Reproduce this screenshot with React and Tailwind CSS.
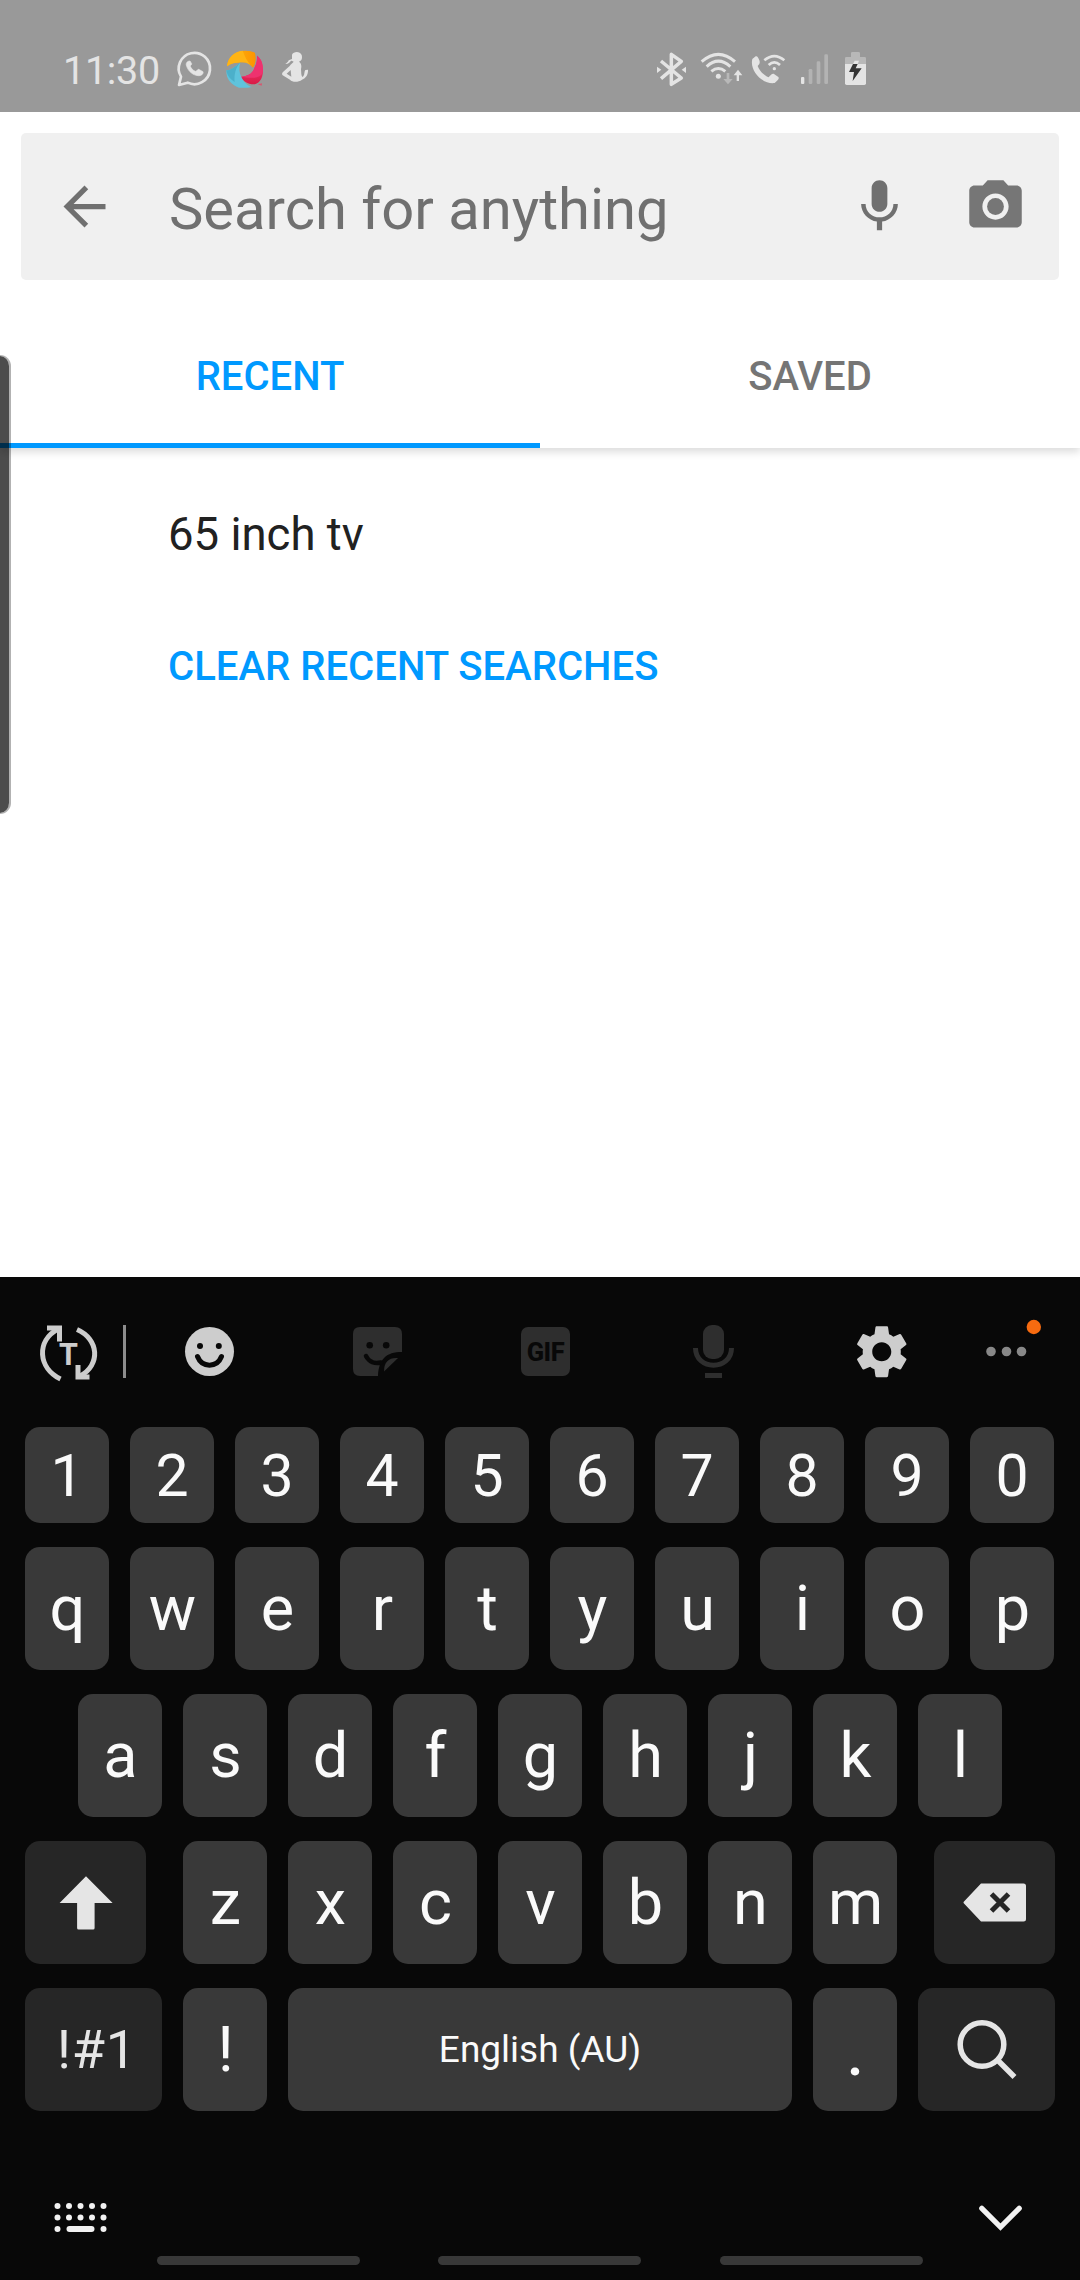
import React from "react";

const settingsPath =
  "M19.14,12.94c0.04-0.3,0.06-0.61,0.06-0.94c0-0.32-0.02-0.64-0.07-0.94l2.03-1.58c0.18-0.14,0.23-0.41,0.12-0.61l-1.92-3.32c-0.12-0.22-0.37-0.29-0.59-0.22l-2.39,0.96c-0.5-0.38-1.03-0.7-1.62-0.94L14.4,2.81c-0.04-0.24-0.24-0.41-0.48-0.41h-3.84c-0.24,0-0.43,0.17-0.47,0.41L9.25,5.35C8.66,5.59,8.12,5.92,7.63,6.29L5.24,5.33c-0.22-0.08-0.47,0-0.59,0.22L2.74,8.87C2.62,9.08,2.66,9.34,2.86,9.48l2.03,1.58C4.84,11.36,4.8,11.69,4.8,12s0.02,0.64,0.07,0.94l-2.03,1.58c-0.18,0.14-0.23,0.41-0.12,0.61l1.92,3.32c0.12,0.22,0.37,0.29,0.59,0.22l2.39-0.96c0.5,0.38,1.03,0.7,1.62,0.94l0.36,2.54c0.05,0.24,0.24,0.41,0.48,0.41h3.84c0.24,0,0.44-0.17,0.47-0.41l0.36-2.54c0.59-0.24,1.13-0.56,1.62-0.94l2.39,0.96c0.22,0.08,0.47,0,0.59-0.22l1.92-3.32c0.12-0.22,0.07-0.47-0.12-0.61L19.14,12.94z M12,15.6c-1.98,0-3.6-1.62-3.6-3.6s1.62-3.6,3.6-3.6s3.6,1.62,3.6,3.6S13.98,15.6,12,15.6z";

function WhatsApp() {
  return (
    <svg className="ml-[15px] h-[40px] w-[40px] shrink-0" viewBox="525 57 120 120" fill="none">
      <path d="M537 165L543 140A47 47 0 1 1 563 158Z" stroke="#e4e4e4" strokeWidth="8" strokeLinejoin="round" />
      <path
        d="M565 94C559 96 557 103 560 109C565 124 580 137 596 137C604 137 611 132 609 125L596 118C592 118 590 125 586 124C580 122 573 115 571 109C571 105 576 104 575 101L570 93Z"
        fill="#e4e4e4"
        stroke="#e4e4e4"
        strokeWidth="2"
      />
    </svg>
  );
}

function Pinwheel() {
  return (
    <svg className="ml-[10px] h-[40px] w-[40px] shrink-0" viewBox="675 55 120 120">
      <defs>
        <linearGradient id="amber" x1="0" x2="1">
          <stop offset="0.4" stopColor="#fdaa0a" />
          <stop offset="1" stopColor="#fc9400" />
        </linearGradient>
        <linearGradient id="pink" x1="0" x2="0" y1="0" y2="1">
          <stop offset="0.4" stopColor="#f0326c" />
          <stop offset="1" stopColor="#d81b45" />
        </linearGradient>
      </defs>
      <path d="M681 107C683 80 705 60 737 60C752 61 764 64 765 67C769 84 767 100 759 111C748 98 735 93 722 95C705 96 692 99 681 107Z" fill="url(#amber)" />
      <path d="M681 107C683 80 703 62 728 60C734 75 742 95 759 111C748 97 736 93 722 95C705 96 692 99 681 107Z" fill="#ffb414" />
      <path d="M771 75C784 85 789 98 789 122C788 146 775 161 762 161C742 161 728 150 723 138C742 137 757 129 762 115C769 100 772 90 771 75Z" fill="url(#pink)" />
      <path d="M771 75C784 85 789 98 789 122C786 134 778 140 762 141C748 142 736 139 723 138C742 137 757 129 762 115C769 100 772 90 771 75Z" fill="#ee326f" />
      <path d="M679 119C690 120 703 109 721 96C716 110 717 126 725 141C731 154 743 165 756 169C742 172 730 172 717 171C694 163 678 146 679 119Z" fill="#5fc3dc" />
      <path d="M679 119C690 120 703 109 721 96C707 110 702 130 704 154C689 145 682 135 679 119Z" fill="#4cb0ca" />
      <path d="M773 161L786 158L785 165Z" fill="#d9566f" />
    </svg>
  );
}

function Figure() {
  return (
    <svg className="ml-[12px] h-[36px] w-[36px] shrink-0" viewBox="831 63 108 108" fill="#e4e4e4">
      <path d="M876 80C880 70 900 68 905 81C908 92 904 99 897 101C905 106 905 116 903 123C904 135 903 141 907 147C915 143 912 131 916 126L924 125C925 139 918 150 906 155C895 163 877 163 870 155L848 142C845 139 846 135 849 132L869 114C872 108 878 105 881 101C877 99 875 98 873 98C869 104 864 109 856 108C862 104 865 101 866 97L876 93Z" />
      <path d="M860 137L872 126L874 146Z" fill="#999999" />
    </svg>
  );
}

function StatusBar() {
  return (
    <div className="flex h-[112px] items-start bg-[#999999] pl-[63px] pt-[49px] text-[#e4e4e4]">
      <div className="flex w-[589px] items-start">
        <span className="-mt-[2px] w-[97px] whitespace-nowrap text-[39.5px] leading-[47px] tracking-[-0.3px]">11:30</span>
        <WhatsApp />
        <Pinwheel />
        <Figure />
      </div>
      <svg className="h-[40px] w-[38px]" viewBox="96 57 114 120" fill="none" stroke="#e4e4e4" strokeWidth="10.5">
        <path d="M123 93L184 144L154 163V73L184 94L123 146" strokeLinejoin="round" />
        <path d="M111 110L124 119L111 129ZM198 110L185 119L198 129Z" fill="#e4e4e4" stroke="none" />
      </svg>
      <svg className="ml-[8px] h-[40px] w-[46px]" viewBox="234 57 138 120" fill="none" stroke="#e4e4e4" strokeWidth="9">
        <path d="M245 95Q295 51 345 95M260 110Q295 77 331 110M274 124Q295 107 316 124" />
        <circle cx="295" cy="139" r="7.5" fill="#e4e4e4" stroke="none" />
        <path d="M320 129H328V147H338L324 163L310 147H320Z" fill="#b8b8b8" stroke="none" />
        <path d="M350 153H357V136H367L354 119L341 136H350Z" fill="#e4e4e4" stroke="none" />
      </svg>
      <svg className="ml-[4px] h-[40px] w-[38px]" viewBox="384 57 114 120" fill="none" stroke="#e4e4e4" strokeWidth="8">
        <path d="M397 87L407 79C411 77 414 80 418 91C421 99 418 103 413 108C418 122 430 135 446 142C451 136 455 130 461 131L475 141C478 145 476 149 464 159C426 164 388 121 397 87Z" fill="#e4e4e4" stroke="none" />
        <path d="M433 91Q463 66 493 91M446 105Q463 89 480 105" />
        <circle cx="463" cy="116" r="5" fill="#e4e4e4" stroke="none" />
      </svg>
      <svg className="ml-[11px] h-[40px] w-[32px]" viewBox="531 57 96 120">
        <rect x="543" y="141" width="10" height="21" rx="3" fill="#e4e4e4" />
        <rect x="566" y="117" width="11" height="45" rx="4" fill="#b3b3b3" />
        <rect x="590" y="94" width="11" height="68" rx="4" fill="#b3b3b3" />
        <rect x="613" y="73" width="11" height="89" rx="4" fill="#b3b3b3" />
      </svg>
      <svg className="ml-[12px] h-[40px] w-[30px]" viewBox="663 57 90 120">
        <path d="M693 70Q693 66 697 66H716Q720 66 720 70V81H734Q738 81 738 85V103H675V85Q675 81 679 81H693Z" fill="#b8b8b8" />
        <path d="M675 102H738V160Q738 165 733 165H680Q675 165 675 160Z" fill="#e4e4e4" />
        <path d="M699 102H713L707 115H725L698 153L702 126H687Z" fill="#353535" />
        <path d="M704 92H717L713 102H699Z" fill="#e4e4e4" />
      </svg>
    </div>
  );
}

function SearchBar() {
  return (
    <div className="mx-[21px] mt-[21px] flex h-[147px] items-center rounded-[5px] bg-[#f0f0f0]">
      <svg className="ml-[32px] size-[63px] shrink-0" viewBox="0 0 24 24" fill="#707070">
        <path d="M20 11H7.83l5.59-5.59L12 4l-8 8 8 8 1.41-1.41L7.83 13H20v-2z" />
      </svg>
      <span className="ml-[53px] w-[679px] whitespace-nowrap pt-[4px] text-[57.9px] leading-[68px] text-[#707070]">
        Search for anything
      </span>
      <svg className="size-[63px] shrink-0" viewBox="0 0 24 24" fill="#707070">
        <path d="M12 14c1.66 0 2.99-1.34 2.99-3L15 5c0-1.66-1.34-3-3-3S9 3.34 9 5v6c0 1.66 1.34 3 3 3zm5.3-3c0 3-2.54 5.1-5.3 5.1S6.7 14 6.7 11H5c0 3.41 2.72 6.23 6 6.72V21h2v-3.28c3.28-.48 6-3.3 6-6.72h-1.7z" />
      </svg>
      <svg className="ml-[53px] size-[63px] shrink-0" viewBox="0 0 24 24" fill="#767676">
        <circle cx="12" cy="12" r="3.2" />
        <path d="M9 2L7.17 4H4c-1.1 0-2 .9-2 2v12c0 1.1.9 2 2 2h16c1.1 0 2-.9 2-2V6c0-1.1-.9-2-2-2h-3.17L15 2H9zm3 15c-2.76 0-5-2.24-5-5s2.24-5 5-5 5 2.24 5 5-2.24 5-5 5z" />
      </svg>
    </div>
  );
}

function Tabs() {
  return (
    <div className="mt-[42px] grid h-[126px] grid-cols-2 text-center text-[40px] font-medium leading-[46px] shadow-[0_4px_8px_rgba(0,0,0,0.14)] [clip-path:inset(0_0_-16px_0)]">
      <div className="border-b-[5px] border-[#0099ff] pt-[32px] text-[#0099ff]">RECENT</div>
      <div className="pt-[32px] text-[#757575]">SAVED</div>
    </div>
  );
}

function Toolbar() {
  return (
    <div className="flex h-[149px] items-start pt-[43px]">
      <svg className="ml-[36px] h-[62px] w-[66px]" viewBox="36 1320 66 62" fill="none" stroke="#cdcdcd" strokeWidth="5">
        <path d="M60.500 1379C38 1368 36 1341 58 1329M77 1329.500C99 1339 101 1365 80 1376" />
        <path d="M47 1328H59.500V1341.500M89.500 1377H78V1365" />
        <text x="68.500" y="1364.700" textAnchor="middle" fill="#cdcdcd" stroke="none" fontFamily="Roboto" fontWeight="700" fontSize="30.500">
          T
        </text>
      </svg>
      <div className="ml-[21px] mt-[5px] h-[53px] w-[3px] bg-[#8c8c8c]" />
      <svg className="ml-[54px] h-[62px] w-[60px]" viewBox="180 1320 60 62" fill="none">
        <circle cx="209.500" cy="1351.500" r="24.500" fill="#cdcdcd" />
        <circle cx="200" cy="1346" r="3" fill="#080808" />
        <circle cx="218.800" cy="1346" r="3" fill="#080808" />
        <path d="M197.500 1356.500C202 1368 217 1368 221.500 1356.500" stroke="#080808" strokeWidth="5" strokeLinecap="round" />
      </svg>
      <svg className="ml-[108px] h-[62px] w-[60px]" viewBox="348 1320 60 62" fill="none">
        <path d="M360 1327H395Q402 1327 402 1334V1352C386 1352 379 1359 378 1376H360Q353 1376 353 1369V1334Q353 1327 360 1327Z" fill="#2e2e2e" />
        <path d="M384 1371.500Q384 1357 398 1358Z" fill="#2e2e2e" />
        <circle cx="369.700" cy="1345.300" r="3.300" fill="#080808" />
        <circle cx="386.200" cy="1345.300" r="3.300" fill="#080808" />
        <path d="M366 1356C369 1362 375 1364 381 1362.500" stroke="#080808" strokeWidth="4.500" strokeLinecap="round" />
      </svg>
      <div className="ml-[113px] mt-[7px] flex h-[49px] w-[49px] items-center justify-center rounded-[7px] bg-[#2e2e2e] pt-px text-[25.5px] font-extrabold tracking-[-0.4px] text-[#080808]">
        GIF
      </div>
      <svg className="ml-[118px] h-[62px] w-[52px]" viewBox="688 1320 52 62" fill="none">
        <rect x="703" y="1325" width="21" height="34" rx="9" fill="#2e2e2e" />
        <path d="M695.500 1348C695.500 1371 731.500 1371 731.500 1348" stroke="#2e2e2e" strokeWidth="5" />
        <rect x="705" y="1373" width="17" height="5" fill="#2e2e2e" />
      </svg>
      <svg className="ml-[110px] size-[63.500px]" viewBox="0 0 24 24" fill="#cdcdcd">
        <path d={settingsPath} />
      </svg>
      <svg className="-mt-[10px] ml-[66px] h-[62px] w-[66px]" viewBox="980 1310 66 62" fill="#888888">
        <circle cx="991" cy="1351.500" r="4.800" />
        <circle cx="1006.500" cy="1351.500" r="4.800" />
        <circle cx="1021.500" cy="1351.500" r="4.800" />
        <circle cx="1033.800" cy="1327" r="7.200" fill="#f76b10" />
      </svg>
    </div>
  );
}

function Key({ children, className = "w-[84px] bg-[#393939] pl-px text-[63px] font-[430] text-[#fafafa]" }) {
  return (
    <div className={"flex h-full shrink-0 items-center justify-center rounded-[15px] leading-none " + className}>{children}</div>
  );
}

function Keyboard() {
  return (
    <div className="flex h-[1003px] flex-col bg-[#080808]">
      <Toolbar />
      <div className="flex flex-col gap-[24px] pl-[25px] pr-[25px] pt-px">
        <div className="flex h-[96px] gap-[21px]">
          {[..."1234567890"].map((k) => (
            <Key key={k} className="w-[84px] bg-[#393939] text-[59px] text-[#fafafa]">{k}</Key>
          ))}
        </div>
        <div className="flex h-[123px] gap-[21px]">
          {[..."qwertyuiop"].map((k) => (
            <Key key={k}>{k}</Key>
          ))}
        </div>
        <div className="flex h-[123px] gap-[21px] pl-[53px]">
          {[..."asdfghjkl"].map((k) => (
            <Key key={k}>{k}</Key>
          ))}
        </div>
        <div className="flex h-[123px] justify-between">
          <Key className="w-[121px] bg-[#262626]">
            <svg className="h-[54px] w-[54px]" viewBox="58.400 1875 54 54" fill="#e5e5e5">
              <path d="M85.400 1875.300L112 1902H94V1927Q94 1928.500 92.500 1928.500H78Q76.500 1928.500 76.500 1927V1902H59Z" />
            </svg>
          </Key>
          <div className="flex gap-[21px]">
            {[..."zxcvbnm"].map((k) => (
              <Key key={k}>{k}</Key>
            ))}
          </div>
          <Key className="w-[121px] bg-[#262626]">
            <svg className="h-[40px] w-[64px]" viewBox="963 1882.500 64 40">
              <path d="M981 1883H1023.500Q1026 1883 1026 1885.500V1918.500Q1026 1921 1023.500 1921H981L964 1903Q963 1902 964 1901Z" fill="#e5e5e5" />
              <path d="M991.500 1893.500L1008.500 1910.500M1008.500 1893.500L991.500 1910.500" stroke="#262626" strokeWidth="5" />
            </svg>
          </Key>
        </div>
        <div className="flex h-[123px] gap-[21px]">
          <Key className="w-[137px] bg-[#262626] pl-[7px] text-[54px] tracking-[0.8px] text-[#e5e5e5]">!#1</Key>
          <Key>!</Key>
          <Key className="w-[504px] bg-[#393939] text-[37px] text-[#fafafa]">English (AU)</Key>
          <Key className="w-[84px] bg-[#393939] pl-px text-[75px] text-[#fafafa]">.</Key>
          <Key className="w-[137px] bg-[#262626]">
            <svg className="h-[62px] w-[62px]" viewBox="955.500 2019 62 62" fill="none" stroke="#e5e5e5" strokeWidth="5.500">
              <circle cx="981.500" cy="2044.500" r="21.800" />
              <path d="M997 2060L1014 2077" />
            </svg>
          </Key>
        </div>
      </div>
      <div className="flex h-[108px] items-start justify-between pl-[53px] pr-[56px] pt-[91px]">
        <svg className="h-[32px] w-[56px] shrink-0" viewBox="53 2202 56 32" fill="#f2f2f2">
          {[57.5, 69, 80.5, 92, 103.5].map((x) => (
            <g key={x}>
              <circle cx={x} cy="2206" r="3" />
              <circle cx={x} cy="2217.500" r="3" />
            </g>
          ))}
          <circle cx="57.500" cy="2229" r="3" />
          <circle cx="103.500" cy="2229" r="3" />
          <rect x="66.500" y="2226" width="28" height="6" rx="3" />
        </svg>
        <svg className="h-[30px] w-[48px] shrink-0" viewBox="976 2202 48 30" fill="none" stroke="#f2f2f2" strokeWidth="5.300" strokeLinecap="round">
          <path d="M981.800 2208.300L1000.500 2227L1019.200 2208.300" />
        </svg>
      </div>
      <div className="ml-[157px] mt-[37px] flex gap-[78px]">
        <div className="h-[9px] w-[203px] rounded-full bg-[#383838]" />
        <div className="h-[9px] w-[203px] rounded-full bg-[#383838]" />
        <div className="ml-px h-[9px] w-[203px] rounded-full bg-[#383838]" />
      </div>
    </div>
  );
}

export default function App() {
  return (
    <div className="relative flex h-[2280px] w-[1080px] flex-col overflow-hidden bg-white font-[Roboto,sans-serif]">
      <StatusBar />
      <SearchBar />
      <Tabs />
      <div className="flex flex-1 flex-col items-start pl-[168px]">
        <p className="mt-[61px] text-[45.5px] leading-[52px] text-[#212121]">65 inch tv</p>
        <p className="mt-[83px] text-[40.1px] font-medium leading-[46px] text-[#0099ff]">CLEAR RECENT SEARCHES</p>
      </div>
      <Keyboard />
      <div className="absolute left-0 top-[355px] h-[459px] w-[11px] rounded-r-[11px] border-y border-r-2 border-black/30 bg-black/70 bg-clip-padding" />
    </div>
  );
}
